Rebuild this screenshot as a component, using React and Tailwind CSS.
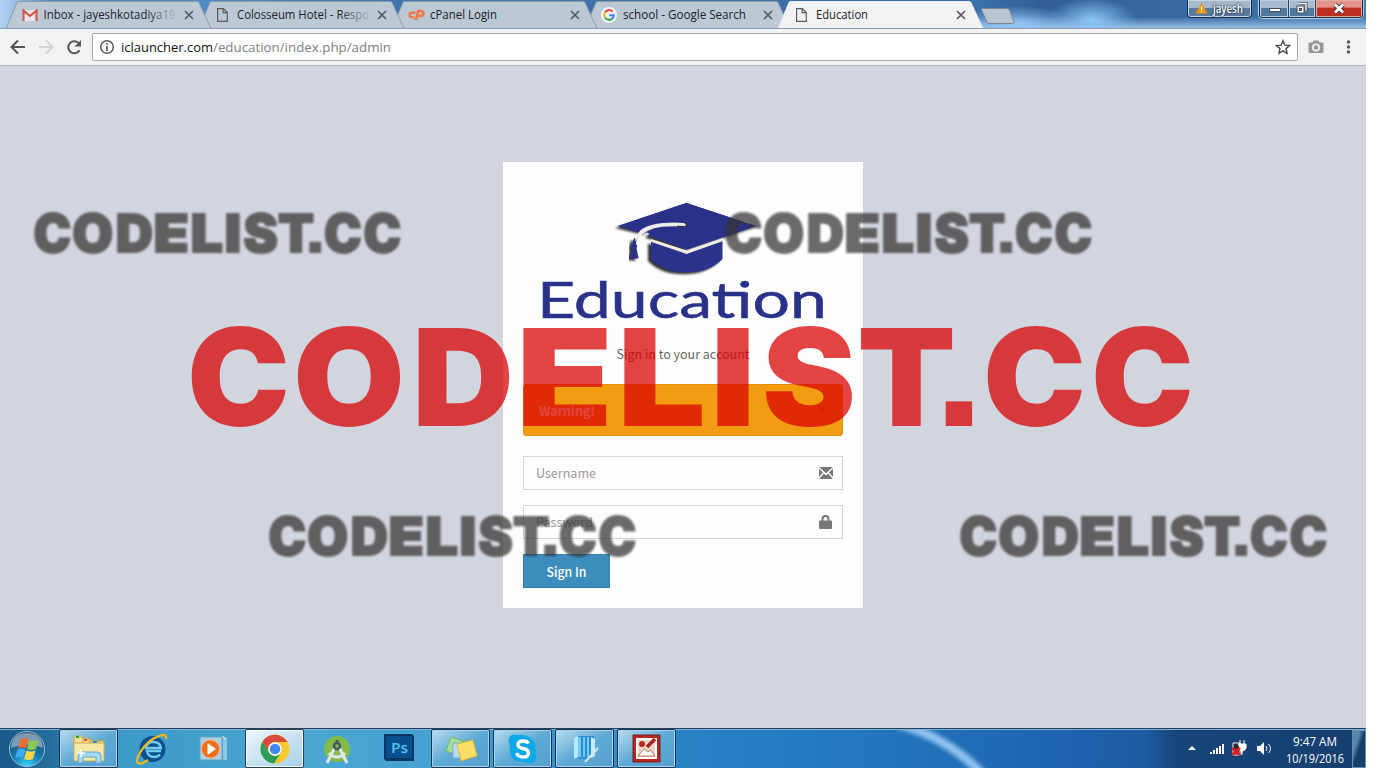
import React from "react";

const UI = "font-['Open_Sans',sans-serif]";
const SOURCE = "font-['Noto_Sans_CJK_SC',sans-serif]";

function PageIcon({ color = "#5a5a5a" }) {
  return (
    <svg width="16" height="16" viewBox="0 0 16 16" fill="none" stroke={color} strokeWidth="1.2">
      <path d="M2.6 1.6h5.8l3.9 3.9v8.9H2.6z" />
      <path d="M8.2 1.6v4.1h4.1" />
    </svg>
  );
}

function GmailIcon() {
  return (
    <svg width="16" height="16" viewBox="0 0 16 16">
      <path d="M2 3h12v11H2z" fill="#e4e6e8" />
      <path d="M1.500 14V3.6L8 9l6.500-5.4V14" fill="none" stroke="#d4534b" strokeWidth="2.1" />
    </svg>
  );
}

function CpanelIcon() {
  return (
    <svg width="17" height="16" viewBox="0 0 17 16" fill="none" stroke="#ee7a4c" strokeWidth="2.6">
      <path d="M7.500 5.800H4.100a2.200 2.200 0 0 0-.3 4.500h2.400" />
      <path d="M7.800 13.200 10.200 4h2.900a2.400 2.400 0 0 1-.2 4.900h-3.200" />
    </svg>
  );
}

function GoogleIcon() {
  return (
    <svg width="16" height="16" viewBox="0 0 16 16" fill="none">
      <circle cx="8" cy="8" r="8" fill="#f3f6f8" />
      <g strokeWidth="2.1">
        <path d="M3.9 5.5A4.8 4.8 0 0 1 11.6 4.6" stroke="#e2463b" />
        <path d="M3.9 10.5a4.8 4.8 0 0 1 0-5" stroke="#f6b912" />
        <path d="M11.2 11.6a4.8 4.8 0 0 1-7.3-1.1" stroke="#36a552" />
        <path d="M8.2 8.2h4.6a4.8 4.8 0 0 1-1.7 3.5" stroke="#4285f4" />
      </g>
    </svg>
  );
}

function Tab({ icon, title, active, first, length, layer }) {
  return (
    <div className={`relative flex h-[29px] w-[205px] shrink-0 items-center pl-[16px] ${first ? "ml-[6px]" : "-ml-[12px]"} ${layer}`}>
      <svg className="absolute inset-0" width="205" height="29" viewBox="0 0 205 29">
        <path
          d="M0 28.5 11 2.5Q11.600 1.500 13 1.500H191Q192.500 1.500 193 2.500L205 28.500"
          fill={active ? "#f2f2f2" : "#bcc9d5"}
          stroke={active ? "#e3e8ee" : "#8c99a7"}
          strokeWidth="1"
        />
      </svg>
      <div className="relative flex w-[20px] shrink-0">{icon}</div>
      <svg className="relative overflow-visible" width="138" height="20">
        <defs>
          <linearGradient id="fade" gradientUnits="userSpaceOnUse" x1="104" x2="134" y1="0" y2="0">
            <stop offset="0" stopColor="#17202a" />
            <stop offset="1" stopColor="#17202a" stopOpacity="0.1" />
          </linearGradient>
        </defs>
        <text x={first ? 1.5 : 2} y="14" textLength={length} lengthAdjust="spacingAndGlyphs" className={`${UI} text-[12px]`} fill={length > 125 ? "url(#fade)" : "#17202a"}>
          {title}
        </text>
      </svg>
      <svg className="relative ml-[4px]" width="10" height="10" viewBox="0 0 10 10" stroke="#535b64" strokeWidth="1.7">
        <path d="m1 1 8 8M9 1 1 9" />
      </svg>
    </div>
  );
}

function WindowControls() {
  return (
    <div className="ml-auto mr-[3px] flex gap-[7px]">
      <div className="flex h-[18px] w-[65px] items-center rounded-b-[4px] border border-t-0 border-[#17304d] bg-gradient-to-b from-[#a7b8cb] from-50% to-[#58789c] to-50% pl-[7px] shadow-[inset_0_0_0_1px_#c8d7e6]">
        <svg width="13" height="11" viewBox="0 0 13 11">
          <path d="M6.500 0 12.500 10.500H.500z" fill="#f5960c" />
          <path d="M6.500 3.500v3.500M6.500 8v1.200" stroke="#fff" strokeWidth="1.200" />
        </svg>
        <svg className="overflow-visible" width="36" height="17">
          <text x="5" y="13" textLength="30" lengthAdjust="spacingAndGlyphs" className={`${UI} text-[12px] font-semibold [text-shadow:0_0_2px_#1b3048,0_0_2px_#1b3048]`} fill="#fff">jayesh</text>
        </svg>
      </div>
      <div className="flex h-[18px] w-[104px] overflow-hidden rounded-b-[4px] border border-t-0 border-[#1c2f49] shadow-[0_0_1px_1px_#b6d4ef]">
        <div className="flex w-[29px] items-center justify-center border-r border-[#2b4563] bg-gradient-to-b from-[#a7bacf] from-50% to-[#52779f] to-50% shadow-[inset_0_0_0_1px_#bccee0]">
          <svg width="14" height="8"><rect x="2.500" y="3.500" width="11" height="3" fill="#fff" stroke="#45505f" /></svg>
        </div>
        <div className="flex w-[27px] items-center justify-center border-r border-[#2b4563] bg-gradient-to-b from-[#a7bacf] from-50% to-[#52779f] to-50% shadow-[inset_0_0_0_1px_#bccee0]">
          <svg width="14" height="13" fill="none">
            <path d="M4 1.500h7v7" stroke="#3f4c5d" strokeWidth="3" />
            <path d="M4 1.500h7v7" stroke="#fff" strokeWidth="1.300" />
            <rect x="2" y="4" width="7" height="7" fill="#fff" stroke="#3f4c5d" />
            <rect x="4.500" y="6.500" width="2" height="2" fill="#6684a5" stroke="#3f4c5d" />
          </svg>
        </div>
        <div className="flex flex-1 items-center justify-center bg-gradient-to-b from-[#e2958a] from-40% to-[#bd3020] to-50% shadow-[inset_0_0_0_1px_#e5aaa2]">
          <svg width="14" height="11"><path d="m3 1.500 8 8M11 1.500l-8 8" stroke="#54333a" strokeWidth="4.600" /><path d="m3 1.500 8 8M11 1.500l-8 8" stroke="#fff" strokeWidth="2.700" /></svg>
        </div>
      </div>
    </div>
  );
}

function TabStrip() {
  return (
    <div className="flex h-[29px] items-start overflow-hidden border-b border-[#8b9bb0] bg-[radial-gradient(ellipse_45px_22px_at_1092px_20px,#8cc8f6,transparent),radial-gradient(ellipse_60px_18px_at_1018px_24px,#90c6f4,transparent),linear-gradient(180deg,transparent_17px,#a9cdf0_30px),linear-gradient(90deg,#b7d5f2_0px,#4f8ac9_50px,#4f8ac9_200px,#3c72ad_420px,#3a6fa9_980px,#305f96_1040px,#33659e_1130px,#4377ae_1366px)]">
      <Tab first layer="z-[4]" icon={<GmailIcon />} title="Inbox - jayeshkotadiya19" length="132" />
      <Tab layer="z-[3]" icon={<PageIcon />} title="Colosseum Hotel - Respo" length="132" />
      <Tab layer="z-[2]" icon={<CpanelIcon />} title="cPanel Login" length="67" />
      <Tab layer="z-[1]" icon={<GoogleIcon />} title="school - Google Search" length="123" />
      <Tab active layer="z-10" icon={<PageIcon />} title="Education" length="52" />
      <svg className="-ml-[3px] shrink-0" width="36" height="29">
        <path d="M2 8.500h25q2 0 2.500 1.500l4.500 12q.500 1.500-1.500 1.500H9q-1.500 0-2-1.500L1.500 10Q1 8.500 2 8.500z" fill="#b9c5d1" stroke="#768697" />
      </svg>
      <WindowControls />
    </div>
  );
}

function Toolbar() {
  return (
    <div className="flex h-[37px] items-center border-b border-[#b3b5b9] bg-[#f2f2f2]">
      <svg width="92" height="36" fill="none" strokeWidth="2">
        <g stroke="#545454"><path d="M25 18H12M18 11.500 11.500 18l6.500 6.500" /></g>
        <g stroke="#d2d2d2"><path d="M39 18h13M46 11.500l6.500 6.500-6.500 6.500" /></g>
        <path d="M79.500 21.300A6 6 0 1 1 78.300 13.800" stroke="#545454" />
        <path d="M81 11v6.500h-6.500z" fill="#545454" />
      </svg>
      <div className="flex h-[28px] w-[1206px] items-center rounded-[2px] border border-[#a6a6a6] bg-white">
        <svg width="28" height="26" fill="none" stroke="#5a5a5a">
          <circle cx="14" cy="13" r="6.300" strokeWidth="1.500" />
          <path d="M14 12v5M14 9v1.700" strokeWidth="1.700" />
        </svg>
        <svg className="overflow-visible" width="290" height="26">
          <text x="0" y="17.500" textLength="92" lengthAdjust="spacingAndGlyphs" className={`${UI} text-[13.500px]`} fill="#111">iclauncher.com</text>
          <text x="92" y="17.500" textLength="178" lengthAdjust="spacingAndGlyphs" className={`${UI} text-[13.500px]`} fill="#808080">/education/index.php/admin</text>
        </svg>
        <svg className="ml-auto mr-[6px]" width="16" height="16" viewBox="0 0 16 16">
          <path d="m8 1.700 1.800 4.400 4.800.400-3.600 3.100 1.100 4.700L8 11.800l-4.100 2.500L5 9.600 1.400 6.500l4.800-.4z" fill="none" stroke="#4b4b4b" strokeWidth="1.400" />
        </svg>
      </div>
      <svg className="ml-[10px]" width="16" height="16" viewBox="0 0 16 16">
        <path d="M2 3.500h2.500L5.500 1.500h5l1 2h3Q15.500 3.500 15.500 4.500V13q0 1-1 1h-13q-1 0-1-1V4.500Q.500 3.500 2 3.500z" fill="#959595" />
        <circle cx="8" cy="8.500" r="3.200" fill="#959595" stroke="#f2f2f2" strokeWidth="1.700" />
      </svg>
      <svg className="ml-[20px]" width="8" height="16" fill="#555">
        <circle cx="4.500" cy="3" r="1.700" /><circle cx="4.500" cy="8" r="1.700" /><circle cx="4.500" cy="13" r="1.700" />
      </svg>
    </div>
  );
}

function Logo() {
  return (
    <svg className="mt-[36px] overflow-visible" width="320" height="126" viewBox="0 0 320 126">
      <defs>
        <filter id="shade" x="-10%" y="-10%" width="120%" height="130%">
          <feDropShadow dx="-3" dy="2" stdDeviation="1.200" floodColor="#111" floodOpacity="0.85" />
        </filter>
      </defs>
      <g fill="#293189" filter="url(#shade)">
        <path d="M163.500 5 233 28l-69.500 23.500-38.500-14q7-7 18-8.200 10-.8 18 .5 3-1.500 1-3.500-3-1-10-1-19-1-29 9.500L95 28z" />
        <path d="M128 43.500 163.500 56 199.500 43v18q-13 13.300-36 13.300T128 61z" />
      </g>
      <path d="M164 52.500 200 40v3l-36 12.500-37-12 1-2.500z" fill="#efede8" />
      <path d="m120 33 44 17.500L233 28 163.500 5 95 28l17 5.500z" fill="#293189" />
      <g fill="#293189" filter="url(#shade)">
        <path d="M111.500 40q-2 3-2 6l-1.500 2 1.500 2-2.500 10.500h8.500l-2-10.500 1-2-1.500-2q0-3 1-5z" />
      </g>
      <path d="M112 43q2-16 28-18 12-1 21 0 3.500 2 0 3.800-10-1-22 0-17 2-24.500 13z" fill="#efede8" />
      <path d="M154 28.400q6 0 8.500.300 3.500-1.500.500-3.700" fill="none" stroke="#393737" strokeWidth="1.200" />
      <g fill="#293189" stroke="#293189" strokeWidth="0.500" className="font-[Lato,sans-serif]">
        <text x="14" y="119.500" textLength="290" lengthAdjust="spacingAndGlyphs" fontSize="51">Education</text>
        <path d="M190 94h32v3.500h-32z" />
      </g>
    </svg>
  );
}

function Field({ label, length, icon }) {
  return (
    <label className="flex h-[34px] items-center justify-between border border-[#d2d6de] pl-[12px] pr-[9px]">
      <svg className="overflow-visible" width="80" height="24">
        <text x="0" y="17" textLength={length} lengthAdjust="spacingAndGlyphs" className={`${SOURCE} text-[13px]`} fill="#999">{label}</text>
      </svg>
      {icon}
    </label>
  );
}

function LoginCard() {
  return (
    <main className="flex w-[360px] flex-col bg-[#fdfdfd] px-[20px] pb-[20px]">
      <Logo />
      <svg className="mt-[18px] overflow-visible" width="320" height="24">
        <text x="93.500" y="17" textLength="133" lengthAdjust="spacingAndGlyphs" className={`${SOURCE} text-[13px]`} fill="#666">Sign in to your account</text>
      </svg>
      <div className="mt-[18px] flex h-[52px] items-center justify-between rounded-[3px] border border-[#e08e0b] bg-[#f39c12] pl-[15px] pr-[15px]">
        <svg className="overflow-visible" width="60" height="24">
          <text x="0" y="17.500" textLength="56" lengthAdjust="spacingAndGlyphs" className={`${SOURCE} text-[13px] font-bold`} fill="#fff">Warning!</text>
        </svg>
        <svg width="10" height="10" stroke="#c27d0e" strokeWidth="1.600"><path d="m1.500 1.500 7 7M8.500 1.500l-7 7" /></svg>
      </div>
      <form className="mt-[20px] flex flex-col gap-[15px]">
        <Field label="Username" length="60" icon={
          <svg width="14" height="12" viewBox="0 0 14 12" fill="#777">
            <path d="M.200 0h13.600L7 6.300zM0 1.500 4 5.600 0 10zM14 1.500v8.500l-4-4.400zM4.800 6.400 7 8.400l2.200-2 4.600 5.600H.200z" />
          </svg>
        } />
        <Field label="Password" length="57" icon={
          <svg className="mr-px" width="13" height="14" viewBox="0 0 13 14">
            <path d="M3.500 7V4q0-3 3-3t3 3v3" fill="none" stroke="#777" strokeWidth="2" />
            <rect y="5.500" width="13" height="8.500" rx="1" fill="#777" />
          </svg>
        } />
        <button type="button" className="flex h-[34px] w-[87px] items-center justify-center border border-[#367fa9] bg-[#3c8dbc]">
          <svg className="overflow-visible" width="42" height="24">
            <text x="0.500" y="17.500" textLength="40" lengthAdjust="spacingAndGlyphs" className={`${SOURCE} text-[13px] font-medium`} fill="#fff">Sign In</text>
          </svg>
        </button>
      </form>
    </main>
  );
}

const taskIcons = [
  <svg width="36" height="34" viewBox="0 0 36 34" key="explorer">
    <path d="M3 4h7l1 2h7v8H3zM12 7h7l1 2h8v6H12zM20 9h13v9H20z" fill="#f4df8f" stroke="#c7a94f" />
    <path d="M3 11h30v18H3z" fill="#f6e7a4" stroke="#c9ae5c" />
    <path d="M5 5h3" stroke="#19a33d" strokeWidth="2" /><path d="M13 8h3" stroke="#d54b36" strokeWidth="2" /><path d="M22 10h4" stroke="#3285d2" strokeWidth="2" />
    <path d="M7 31v-7q0-4 4-4h15q4 0 4 4v7h-5v-6H12v6z" fill="#a8d9f3" stroke="#5aa6d3" />
    <path d="M10 17v8M6 21h8" stroke="#fff" strokeWidth="1.300" />
  </svg>,
  <svg width="36" height="36" viewBox="0 0 36 36" key="ie">
    <circle cx="19.500" cy="18" r="13" fill="#0b4f8c" />
    <path d="M28 20H14q1 6 7 6 4 0 6-2.500M13 17q1-6 7-6 7 0 8 6z" stroke="#74cbf2" strokeWidth="2.300" fill="none" />
    <path d="M33 8q1-6-7-3Q15 9 8 20 2 30 5 32q3 2 10-3" fill="none" stroke="#f3b91e" strokeWidth="2.300" />
  </svg>,
  <svg width="36" height="34" viewBox="0 0 36 34" key="wmp">
    <path d="M5 5h22v23H5z" fill="#a9d0e7" stroke="#6a9fbe" /><path d="M27 5h2v23M29 6h2v22" fill="none" stroke="#d5edf9" />
    <circle cx="15.500" cy="17" r="9" fill="#ef6c19" stroke="#fbac6f" /><path d="m12.500 11 8.500 6-8.500 6z" fill="#fff" />
  </svg>,
  <svg width="30" height="30" viewBox="0 0 30 30" key="chrome">
    <circle cx="15" cy="15" r="14.500" fill="#f8ca31" />
    <path d="M2.400 7.800A14.500 14.500 0 0 1 27.500 8H15a7 7 0 0 0-6.300 10z" fill="#da4a3f" />
    <path d="M2.400 7.800A14.500 14.500 0 0 0 14 29.500L21 18.500a7 7 0 0 1-12 0z" fill="#2b9d59" />
    <circle cx="15" cy="15" r="6.700" fill="#fff" /><circle cx="15" cy="15" r="5.300" fill="#4389f2" />
  </svg>,
  <svg width="30" height="34" viewBox="0 0 30 34" key="android">
    <circle cx="15" cy="17" r="13" fill="#83bc45" />
    <g fill="none" stroke="#e3e7ea" strokeWidth="3"><path d="M13 15 5 31M17 15l8 16M7 21q8 8 16 0" /></g>
    <circle cx="15" cy="14" r="3" fill="none" stroke="#455b67" strokeWidth="2.500" /><path d="M15 8v4" stroke="#455b67" strokeWidth="3" />
  </svg>,
  <svg width="30" height="34" viewBox="0 0 30 34" key="photoshop">
    <path d="M0 2h28l2 2v25H2l-2-2z" fill="#043764" /><path d="M2 4h26v22H2z" fill="#07508d" />
    <text x="7" y="20.500" className="font-['Open_Sans'] text-[15px] font-semibold" textLength="17" lengthAdjust="spacingAndGlyphs" fill="#55c4f5">Ps</text>
  </svg>,
  <svg width="34" height="28" viewBox="0 0 34 28" key="notes">
    <path d="m7 2 14 5-5 14-14-5z" fill="#a9df92" stroke="#6eba69" /><path d="M9 8h15v15H9z" fill="#b9d9fb" stroke="#75a9dc" /><path d="m13 9 16-4 4 16-16 5z" fill="#f9df67" stroke="#d7b33a" />
  </svg>,
  <svg width="30" height="30" viewBox="0 0 30 30" key="skype">
    <path d="M1 4Q3-1 10 1q13-2 17 10 1 5 .500 8 3 8-4 10-3 1-7-1Q0 28 2 12 0 8 1 4z" fill="#0aa9e8" />
    <path d="M20.500 9.500Q19 7 15 7q-5 0-5 3.500 0 3 5 4t5.500 4.200Q20.500 23 15 23q-5 0-6.500-4" fill="none" stroke="#fff" strokeWidth="3.400" />
  </svg>,
  <svg width="30" height="30" viewBox="0 0 30 30" key="journal">
    <path d="m4 4 4-2v21l-4 2z" fill="#b7eaff" /><path d="M8 2h16v18l-4 5H8z" fill="#2b8ed5" /><path d="M8 3h3v20H8zM13 3h2v20h-2zM17 3h2v20h-2z" fill="#72c9f5" /><path d="m21 3 4 2v17l-4 2z" fill="#cbe9f8" /><path d="M15 28 28 14" stroke="#dbe4ea" strokeWidth="2" />
  </svg>,
  <svg width="30" height="30" viewBox="0 0 30 30" key="picture">
    <path d="M1 1h27v27H1z" fill="#b5261e" stroke="#761f20" /><path d="M4 4h21v21H4z" fill="#fff" /><path d="M6 6h17v17H6z" fill="#efd5c3" />
    <circle cx="10" cy="10" r="3" fill="#b5262a" /><path d="m15 13 8-8" stroke="#ab2320" strokeWidth="3.500" /><path d="m6 22 6-7 4 3 3-2 4 6z" fill="#fff" stroke="#b63a31" strokeWidth=".7" />
  </svg>,
];

const openApps = [0, 3, 6, 7, 8, 9];

function StartOrb() {
  return (
    <svg width="38" height="38" viewBox="0 0 38 38">
      <defs>
        <radialGradient id="orb" cx="0.5" cy="1" r="0.9">
          <stop offset="0" stopColor="#35d7ff" /><stop offset="0.5" stopColor="#137cac" /><stop offset="1" stopColor="#214a6c" />
        </radialGradient>
      </defs>
      <circle cx="19" cy="19" r="17.500" fill="url(#orb)" stroke="#a0bed1" />
      <path d="M3 18Q4 3 19 3t16 15q-16-7-32 0z" fill="#afc3d2" opacity=".65" />
      <path d="M12.500 9q4.500-2 8 .5L18 18.500q-3.500-2-8 0z" fill="#ee6b31" /><path d="M21.500 10q4 2 9 0L28 19q-4.500 2-9 0z" fill="#8bc751" /><path d="M9.500 19.500q4-2 8 0L15 28q-3.500-2-8 0z" fill="#3fabed" /><path d="M18.500 20.500q4.500 2 9 0L25 29q-4.500 2-9 0z" fill="#ffd449" />
    </svg>
  );
}

function Taskbar() {
  return (
    <footer className="relative flex h-[40px] items-center border-t border-[#23415e] bg-[linear-gradient(90deg,#195888_0px,#236e9f_50px,#3c9ac9_120px,#4ba6d1_300px,#45a2d4_430px,#2883c5_680px,#2274ba_900px,#1d62ad_1080px,#1c5da3_1145px,#17457a_1175px,#143e6e_1366px)] shadow-[inset_0_1px_0_#7fb0d4]">
      <svg className="absolute left-[890px] top-px" width="120" height="38">
        <path d="M8-6Q60 8 96 48" fill="none" stroke="#8fc3f1" strokeWidth="9" className="blur-[2px]" />
      </svg>
      <div className="flex w-[60px] justify-center pr-[6px]"><StartOrb /></div>
      <div className="-ml-px flex gap-[3px]">
        {taskIcons.map((icon, index) => (
          <div key={index} className={`flex h-[39px] w-[59px] items-center justify-center ${openApps.includes(index) ? (index === 3 ? "rounded-[2px] border border-[#263f53] bg-gradient-to-br from-[#edf6fb] to-[#a6d0e8] shadow-[inset_0_0_0_1px_#f8fcff]" : "rounded-[2px] border border-[#19344d] bg-gradient-to-br from-[#b9dcef] via-[#5daad5] to-[#559fd0] shadow-[inset_0_0_0_1px_#a9d3ee]") : ""}`}>
            {icon}
          </div>
        ))}
      </div>
      <div className="ml-auto mr-[1px] flex items-center">
        <svg className="mr-[3px]" width="98" height="30" fill="#fff">
          <path d="m10 16 4-4 4 4z" />
          <path d="M32 18h2v2h-2zM35 16h2v4h-2zM38 14h2v6h-2zM41 12h2v8h-2zM44 10h2v10h-2z" />
          <path d="M55 9h7v12h-7z" fill="#292d31" stroke="#f1f1f1" /><path d="M60 10h8v4q-1 3-4 3v4M62 6v4M66 6v4" fill="#fff" stroke="#fff" /><path d="m54 14 8 7M62 14l-8 7" stroke="#f21b1b" strokeWidth="2.500" />
          <path d="M79 12h3l4-4v13l-4-4h-3z" /><path d="M88 12q2 3 0 5M90.500 10q4 5 0 9" fill="none" stroke="#fff" />
        </svg>
        <svg className="overflow-visible" width="72" height="38">
          <g className={`${UI} text-[12px]`} fill="#fff">
            <text x="14" y="15.500" textLength="44" lengthAdjust="spacingAndGlyphs">9:47 AM</text>
            <text x="7" y="32.500" textLength="58" lengthAdjust="spacingAndGlyphs">10/19/2016</text>
          </g>
        </svg>
      </div>
      <div className="h-[38px] w-[14px] border border-[#668eae] bg-gradient-to-br from-[#5685ad] from-30% to-[#153f6b] to-50%" />
    </footer>
  );
}

const glyphs = [
  ["C", 187, 103], ["O", 293, 112], ["D", 412, 102], ["E", 516, 97], ["L", 617, 89], ["I", 710, 46],
  ["S", 762, 94], ["T", 857, 99], [".", 933, 52], ["C", 983, 103], ["C", 1091, 103],
];

function Wordmark() {
  return glyphs.map(([letter, x, width], i) => (
    <text
      key={i}
      x={x}
      y="426"
      textLength={width}
      lengthAdjust="spacingAndGlyphs"
      className={letter === "." ? "font-['Liberation_Sans',sans-serif] text-[165px] font-bold" : ""}
    >
      {letter}
    </text>
  ));
}

function Watermark() {
  const small = [[35, 253], [726, 253], [270, 556], [961, 556]];
  return (
    <svg className="pointer-events-none absolute inset-0 z-20 font-[Inter,sans-serif] text-[135px] font-black" width="1378" height="779">
      <g fill="#d90000" opacity="0.73" className="blur-[0.7px]"><Wordmark /></g>
      {small.map(([x, y]) => (
        <g key={`${x}-${y}`} fill="#363333" stroke="#363333" strokeWidth="5" opacity="0.73" className="blur-[0.8px]">
          <g transform={`translate(${x} ${y - 0.7}) scale(0.365 0.385) translate(-191 -426)`}><Wordmark /></g>
        </g>
      ))}
    </svg>
  );
}

export default function App() {
  return (
    <div className="relative h-[779px] w-[1378px] overflow-hidden bg-white">
      <div className="flex h-[768px] w-[1366px] flex-col">
        <TabStrip />
        <Toolbar />
        <section className="flex flex-1 items-start justify-center bg-[#d1d5de] pt-[96px]">
          <LoginCard />
        </section>
        <Taskbar />
      </div>
      <Watermark />
    </div>
  );
}
